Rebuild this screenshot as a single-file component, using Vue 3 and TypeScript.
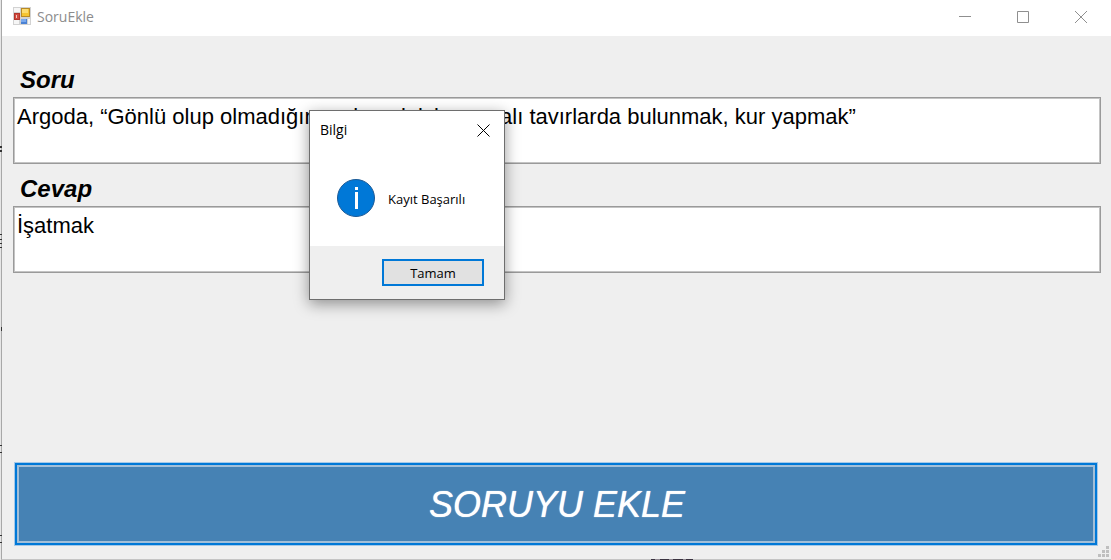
<script setup lang="ts">
import { ref } from 'vue'

const question = ref('Argoda, “Gönlü olup olmadığını anlamak için manalı tavırlarda bulunmak, kur yapmak”')
const answer = ref('İşatmak')
const dialogOpen = ref(true)
</script>

<template>
  <div class="desktop">
    <main class="window">
      <header class="titlebar">
        <svg class="app-icon" width="18" height="18" viewBox="0 0 18 18" aria-hidden="true">
          <rect width="18" height="18" fill="#d2d2d2" />
          <path d="M1 1h6v4H1zM1 13h5v4H1zM15 12h2v5h-2z" fill="#f6f6f6" />
          <rect x="1" y="6" width="6" height="7" fill="#b3352c" />
          <rect x="2" y="7" width="4" height="5" fill="#cf4a3f" />
          <rect x="3" y="8" width="1" height="3" fill="#f3c9c2" />
          <rect x="8" y="1" width="9" height="9" fill="#b88a26" />
          <rect x="9" y="2" width="7" height="7" fill="#f5c431" />
          <rect x="9" y="2" width="6" height="4" fill="#fbdc72" />
          <rect x="8" y="12" width="6" height="5" fill="#4a82d4" />
          <rect x="8" y="12" width="5" height="3" fill="#79a9ee" />
        </svg>
        <h1 class="title">SoruEkle</h1>
        <div class="controls">
          <button type="button" class="control" aria-label="Simge durumuna küçült">
            <svg width="12" height="12" viewBox="0 0 12 12"><path d="M0 5.500h12" /></svg>
          </button>
          <button type="button" class="control" aria-label="Ekranı kapla">
            <svg width="12" height="12" viewBox="0 0 12 12"><path d="M.5.5h11v11H.5z" /></svg>
          </button>
          <button type="button" class="control" aria-label="Kapat">
            <svg width="12" height="12" viewBox="0 0 12 12"><path d="M0 0l12 12M12 0L0 12" /></svg>
          </button>
        </div>
      </header>

      <form class="form" @submit.prevent="dialogOpen = true">
        <label class="label" for="question">Soru</label>
        <textarea id="question" v-model="question" class="field" spellcheck="false"></textarea>
        <label class="label" for="answer">Cevap</label>
        <textarea id="answer" v-model="answer" class="field" spellcheck="false"></textarea>
        <button type="submit" class="submit">SORUYU EKLE</button>
      </form>

      <svg class="grip" width="12" height="12" viewBox="0 0 12 12" aria-hidden="true">
        <path d="M8 0h3v3H8zM4 4h3v3H4zM8 4h3v3H8zM0 8h3v3H0zM4 8h3v3H4zM8 8h3v3H8z" fill="#bfbfbf" />
      </svg>
    </main>

    <svg class="behind-left" width="2" height="560" viewBox="0 0 2 560" aria-hidden="true">
      <path
        d="M0 146h2v2H0zM0 150h2v2H0zM0 234h2v1H0zM0 239h2v1H0zM0 243h2v1H0zM0 247h2v1H0zM1 327h1v4H1zM0 445h2v1H0zM0 452h2v1H0zM0 535h2v1H0zM0 542h2v1H0z"
        fill="#333"
      />
    </svg>
    <svg class="behind-bottom" width="42" height="1" viewBox="0 0 42 1" aria-hidden="true">
      <rect width="42" height="1" fill="#3a3340" />
      <path d="M4 0h5v1H4zM18 0h4v1h-4zM32 0h3v1h-3z" fill="#8f8790" />
    </svg>

    <section v-if="dialogOpen" class="dialog" role="dialog" aria-labelledby="dialog-title">
      <header class="dialog-head">
        <h2 id="dialog-title" class="dialog-title">Bilgi</h2>
        <button type="button" class="dialog-close" aria-label="Kapat" @click="dialogOpen = false">
          <svg width="13" height="13" viewBox="0 0 13 13"><path d="M.5.5l12 12M12.5.5l-12 12" /></svg>
        </button>
      </header>
      <div class="dialog-body">
        <svg width="38" height="38" viewBox="0 0 38 38" aria-hidden="true">
          <circle cx="19" cy="19" r="18.5" fill="#0078d7" stroke="#1c5a96" />
          <rect x="18" y="8" width="3" height="3" fill="#fff" />
          <rect x="18" y="13" width="3" height="17" fill="#fff" />
        </svg>
        <p class="message">Kayıt Başarılı</p>
      </div>
      <footer class="dialog-foot">
        <button type="button" class="ok" @click="dialogOpen = false">Tamam</button>
      </footer>
    </section>
  </div>
</template>

<style>
body {
  margin: 0;
  background: #e6e6e6;
}
</style>

<style scoped>
.desktop {
  position: relative;
  display: flex;
  min-height: 100vh;
  box-sizing: border-box;
  padding-left: 1px;
}

.window {
  position: relative;
  flex: 1;
  display: flex;
  flex-direction: column;
  min-width: 0;
  background: #efefef;
  border-left: 1px solid #a8a8a8;
  border-bottom: 1px solid #c4c4c4;
}

.behind-left {
  position: absolute;
  top: 0;
  left: 0;
}

.behind-bottom {
  position: absolute;
  bottom: 0;
  left: 651px;
}

.titlebar {
  display: flex;
  align-items: center;
  height: 36px;
  padding: 0 1px 0 11px;
  background: #fff;
}

.app-icon {
  margin-bottom: 4px;
}

.title {
  flex: 1;
  margin: 0 0 2px 6px;
  font: 400 14px/20px "Open Sans", "Noto Sans", sans-serif;
  color: #8c8c8c;
}

.controls {
  display: flex;
}

.control {
  display: flex;
  align-items: center;
  justify-content: center;
  width: 58px;
  height: 36px;
  padding: 0 0 2px;
  border: 0;
  background: none;
}

.control svg {
  fill: none;
  stroke: #8f8f8f;
}

.form {
  flex: 1;
  display: flex;
  flex-direction: column;
  padding: 27px 10px 13px 11px;
}

.label {
  margin-left: 7px;
  font: italic 700 24px/34px "Liberation Sans", Arial, sans-serif;
  color: #000;
}

.field {
  box-sizing: border-box;
  width: 100%;
  height: 67px;
  margin: 0 0 8px;
  padding: 6px 3px;
  border: 1px solid #9a9a9a;
  box-shadow: inset 0 0 0 1px #c4c4c4;
  background: #fff;
  color: #000;
  font: 400 22px/26px "Liberation Sans", Arial, sans-serif;
  resize: none;
  outline: 0;
  overflow: hidden;
}

.submit {
  height: 84px;
  margin: auto 3px 0 1px;
  padding: 2px 0 0 2px;
  border: 1px solid #a6c9e8;
  box-shadow: inset 0 0 0 2px #0078d7, inset 0 0 0 4px #a3bfd8;
  background: #4682b4;
  color: #fff;
  font: italic 400 36px/40px "Liberation Sans", Arial, sans-serif;
  text-shadow: 0 0 1px #fff;
}

.grip {
  position: absolute;
  right: 1px;
  bottom: 1px;
}

.dialog {
  position: absolute;
  top: 110px;
  left: 309px;
  box-sizing: border-box;
  width: 196px;
  border: 1px solid #6e6e6e;
  background: #fff;
  box-shadow: 0 4px 14px rgba(0, 0, 0, 0.4);
  color: #000;
  font: 400 13px/18px "Open Sans", "Noto Sans", sans-serif;
}

.dialog-head {
  display: flex;
  align-items: center;
  justify-content: space-between;
  height: 38px;
  padding: 0 14px 0 10px;
}

.dialog-title {
  margin: 0;
  font: 400 14px/20px "Open Sans", "Noto Sans", sans-serif;
}

.dialog-close {
  display: flex;
  padding: 0;
  border: 0;
  background: none;
}

.dialog-close svg {
  fill: none;
  stroke: #000;
}

.dialog-body {
  display: flex;
  align-items: center;
  gap: 13px;
  height: 97px;
  padding-left: 27px;
}

.message {
  margin: 2px 0 0;
  white-space: nowrap;
}

.dialog-foot {
  display: flex;
  align-items: center;
  justify-content: flex-end;
  height: 53px;
  padding-right: 20px;
  background: #efefef;
}

.ok {
  width: 102px;
  height: 27px;
  padding: 0;
  border: 2px solid #0078d7;
  background: #e1e1e1;
  color: #000;
  font: 400 13px/20px "Open Sans", "Noto Sans", sans-serif;
}
</style>
